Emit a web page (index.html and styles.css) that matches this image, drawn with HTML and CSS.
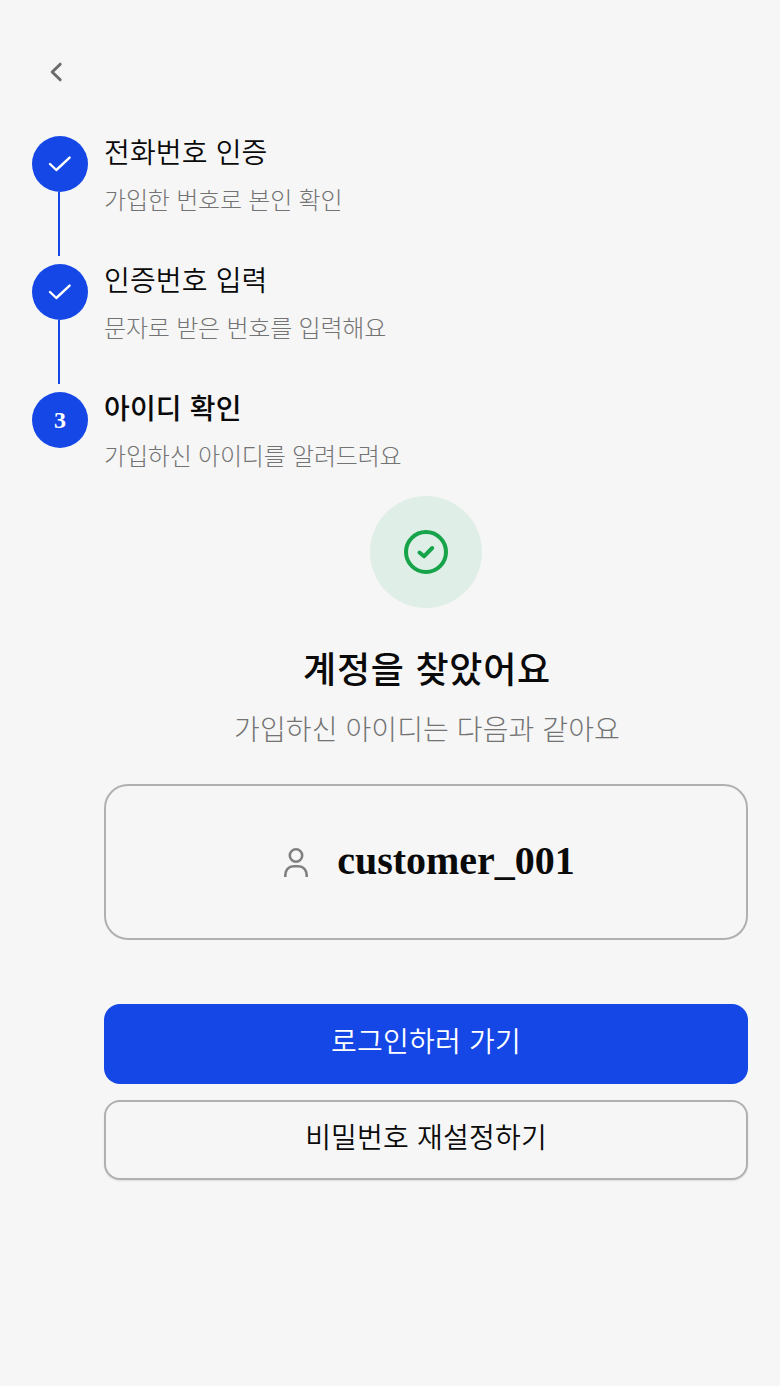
FILE: index.html
```html
<!DOCTYPE html>
<html lang="ko">
<head>
    <meta charset="UTF-8">
    <title>아이디 찾기</title>
    <link rel="stylesheet" href="styles.css">
</head>
<body>
<div id="page">
    <div class="top">
        <svg class="back" width="48" height="48" viewBox="0 0 48 48" fill="none"><path d="M28.2 16.2 L20.2 24 L28.2 31.8" stroke="#6b6b6b" stroke-width="3" stroke-linecap="round" stroke-linejoin="round"/></svg>
    </div>
    <ul class="steps">
        <li class="step">
            <div class="mark">
                <span class="dot"><svg width="28" height="28" viewBox="0 0 28 28" fill="none"><path d="M4 14 L10.3 20 L23.6 7.6" stroke="#fff" stroke-width="2.4" stroke-linecap="round" stroke-linejoin="round"/></svg></span>
                <span class="line"></span>
            </div>
            <div class="info">
                <div class="name">전화번호 인증</div>
                <div class="desc">가입한 번호로 본인 확인</div>
            </div>
        </li>
        <li class="step">
            <div class="mark">
                <span class="dot"><svg width="28" height="28" viewBox="0 0 28 28" fill="none"><path d="M4 14 L10.3 20 L23.6 7.6" stroke="#fff" stroke-width="2.4" stroke-linecap="round" stroke-linejoin="round"/></svg></span>
                <span class="line"></span>
            </div>
            <div class="info">
                <div class="name">인증번호 입력</div>
                <div class="desc">문자로 받은 번호를 입력해요</div>
            </div>
        </li>
        <li class="step">
            <div class="mark">
                <span class="dot num">3</span>
            </div>
            <div class="info">
                <div class="name on">아이디 확인</div>
                <div class="desc">가입하신 아이디를 알려드려요</div>
            </div>
        </li>
    </ul>
    <div class="result">
        <div class="badge">
            <svg width="48" height="48" viewBox="0 0 48 48" fill="none"><circle cx="24" cy="24" r="20" stroke="#16a34a" stroke-width="4"/><path d="M17.5 24.5 L22 28.3 L30.2 20" stroke="#16a34a" stroke-width="4" stroke-linecap="round" stroke-linejoin="round"/></svg>
        </div>
        <h1>계정을 찾았어요</h1>
        <p class="sub">가입하신 아이디는 다음과 같아요</p>
        <div class="card">
            <svg width="32" height="32" viewBox="0 0 32 32" fill="none"><circle cx="16" cy="9.5" r="6.2" stroke="#808080" stroke-width="2.6"/><path d="M5.3 31 V29 C5.3 24 8.5 20.3 13.5 20.3 H18.5 C23.5 20.3 26.7 24 26.7 29 V31" stroke="#808080" stroke-width="2.6"/></svg>
            <span class="account">customer_001</span>
        </div>
        <button class="btn primary">로그인하러 가기</button>
        <button class="btn outline">비밀번호 재설정하기</button>
    </div>
</div>
</body>
</html>
```

FILE: styles.css
```css
*{
    margin: 0;
    padding: 0;
    box-sizing: border-box;
}
ol,ul{
    list-style: none;
}
body{
    background: #f6f6f6;
    font-family: "Noto Sans CJK KR", "Noto Sans", sans-serif;
    color: #0a0a0a;
}
#page{
    width: 780px;
    min-height: 1386px;
    padding: 48px 32px 0;
}
.top{
    height: 88px;
}
.back{
    display: block;
}
.step{
    display: flex;
    gap: 16px;
}
.mark{
    width: 56px;
    display: flex;
    flex-direction: column;
    align-items: center;
    flex-shrink: 0;
}
.dot{
    width: 56px;
    height: 56px;
    border-radius: 50%;
    background: #1447e6;
    color: #fff;
    display: flex;
    align-items: center;
    justify-content: center;
}
.num{
    font-family: "Liberation Serif", serif;
    font-weight: 700;
    font-size: 24px;
}
.line{
    width: 2px;
    height: 64px;
    margin-right: 2px;
    margin-bottom: 8px;
    background: #1447e6;
}
.name{
    font-size: 28px;
    font-weight: 350;
    line-height: 30px;
    letter-spacing: .15px;
    color: #0a0a0a;
}
.name.on{
    font-weight: 500;
    letter-spacing: .15px;
}
.desc{
    margin-top: 17px;
    font-size: 24px;
    font-weight: 300;
    line-height: 32px;
    letter-spacing: -.2px;
    color: #737373;
}
.result{
    margin-left: 72px;
    margin-top: 25px;
    display: flex;
    flex-direction: column;
    align-items: center;
}
.badge{
    width: 112px;
    height: 112px;
    border-radius: 50%;
    background: #dfeee6;
    display: flex;
    align-items: center;
    justify-content: center;
}
h1{
    margin-top: 35px;
    padding-left: 2px;
    font-size: 36px;
    line-height: 48px;
    font-weight: 500;
    letter-spacing: .75px;
}
.sub{
    margin-top: 17px;
    padding-left: 2px;
    font-size: 28px;
    font-weight: 300;
    line-height: 40px;
    letter-spacing: .1px;
    color: #737373;
}
.card{
    width: 100%;
    height: 156px;
    margin-top: 36px;
    padding-left: 3px;
    border: 2px solid #b0b0b0;
    border-radius: 24px;
    display: flex;
    align-items: center;
    justify-content: center;
    gap: 25px;
}
.account{
    margin-bottom: 4px;
    font-family: "Liberation Serif", serif;
    font-size: 40px;
    font-weight: 700;
}
.btn{
    display: block;
    width: 100%;
    padding-bottom: 8px;
    font-family: inherit;
    font-size: 28px;
    font-weight: 350;
    letter-spacing: .2px;
    border-radius: 16px;
    cursor: pointer;
}
.primary{
    height: 80px;
    margin-top: 64px;
    border: 0;
    background: #1447e6;
    color: #fff;
}
.outline{
    height: 80px;
    margin-top: 16px;
    border: 2px solid #b0b0b0;
    background: #f6f6f6;
    color: #0a0a0a;
    box-shadow: 0 1px 2px rgba(0,0,0,.1);
}
```
